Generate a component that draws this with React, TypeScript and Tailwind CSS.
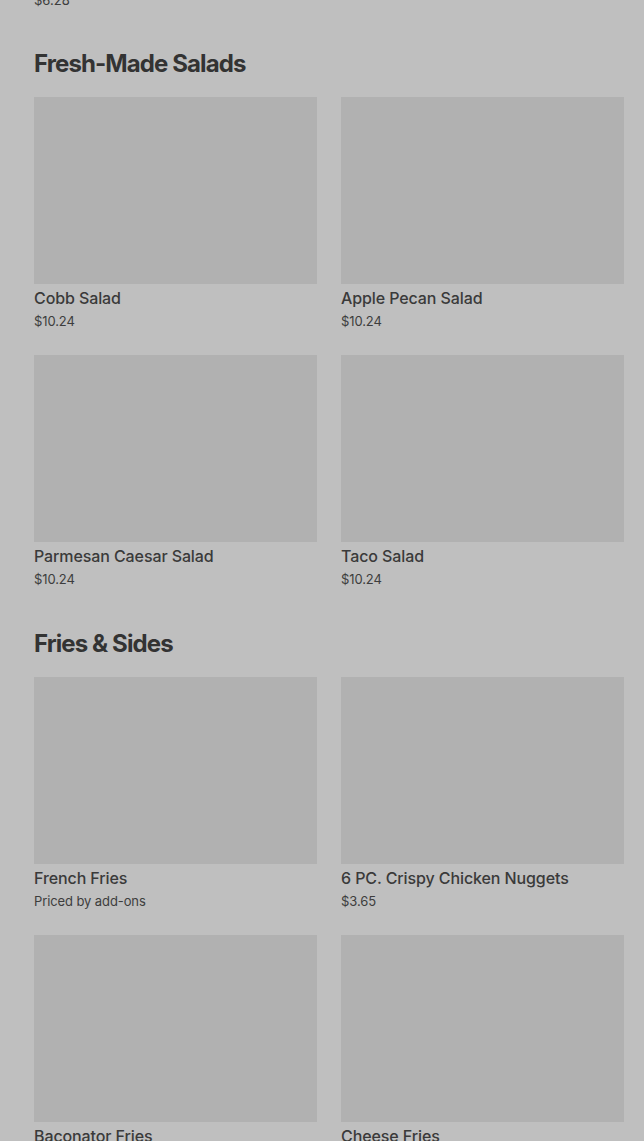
import React from "react";

type Item = { name: string; price: string };

const sections: { title: string; items: Item[] }[] = [
  {
    title: "Fresh-Made Salads",
    items: [
      { name: "Cobb Salad", price: "$10.24" },
      { name: "Apple Pecan Salad", price: "$10.24" },
      { name: "Parmesan Caesar Salad", price: "$10.24" },
      { name: "Taco Salad", price: "$10.24" },
    ],
  },
  {
    title: "Fries & Sides",
    items: [
      { name: "French Fries", price: "Priced by add-ons" },
      { name: "6 PC. Crispy Chicken Nuggets", price: "$3.65" },
      { name: "Baconator Fries", price: "$4.79" },
      { name: "Cheese Fries", price: "$4.29" },
    ],
  },
];

const Card = ({ item }: { item: Item }) => (
  <div className="flex flex-col">
    <div className="h-[187px] w-full bg-[#b1b1b1]" />
    <div className="mt-[4px] text-[16px] leading-[20px] font-medium tracking-[-0.1px] text-[#3a3a3a]">{item.name}</div>
    <div className="mt-[4px] text-[13px] leading-[18px] tracking-[-0.1px] text-[#3d3d3d]">{item.price}</div>
  </div>
);

const App = () => {
  return (
    <div
      className="h-[1141px] overflow-hidden bg-[#bfbfbf] pl-[34px] pr-[20px]"
      style={{ fontFamily: "Inter, 'Noto Sans', sans-serif" }}
    >
      <div className="-mt-[9px] text-[13px] leading-[18px] text-[#3d3d3d]">$6.28</div>
      {sections.map((s, i) => (
        <section key={s.title} className={i === 0 ? "mt-[39px]" : "mt-[40px]"}>
          <h2 className="text-[24px] leading-[32px] font-bold tracking-[-0.9px] text-[#333333]">{s.title}</h2>
          <div className="mt-[17px] grid grid-cols-2 gap-x-[24px] gap-y-[25px]">
            {s.items.map((it) => (
              <Card key={it.name} item={it} />
            ))}
          </div>
        </section>
      ))}
    </div>
  );
};

export default App;
